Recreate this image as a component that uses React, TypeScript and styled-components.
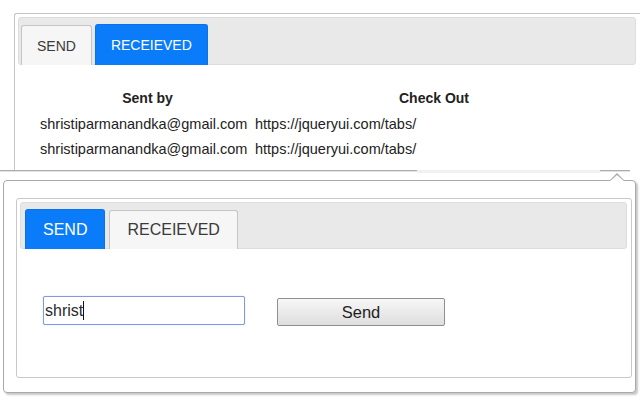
import React from "react";
import styled, { createGlobalStyle, css } from "styled-components";

const GlobalStyle = createGlobalStyle`
  html, body { margin: 0; padding: 0; background: #ffffff; }
  body { font-family: "Liberation Sans", Arial, sans-serif; color: #222; }
  * { box-sizing: border-box; }
`;

type Size = "sm" | "lg";

const Page = styled.div`
  width: 640px;
  height: 400px;
  overflow: hidden;
  display: flex;
  flex-direction: column;
  background: #fff;
`;

const TopPopup = styled.section`
  margin: 13px 0 0 14px;
  width: 626px;
  height: 157px;
  border-top: 1px solid #c4c4c4;
  border-left: 1px solid #c4c4c4;
  border-top-left-radius: 3px;
  padding: 3px 4px 0 3px;
  display: flex;
  flex-direction: column;
`;

const TabBar = styled.div<{ $size: Size }>`
  display: flex;
  align-items: flex-end;
  background: #e9e9e9;
  border: 1px solid #dddddd;
  border-radius: 3px;
  ${(p) =>
    p.$size === "sm"
      ? css`
          height: 48px;
          padding: 0 2px;
          gap: 3px;
        `
      : css`
          height: 47px;
          padding: 0 4px;
          gap: 4px;
        `}
`;

const Tab = styled.div<{ $size: Size; $active?: boolean }>`
  display: flex;
  align-items: center;
  justify-content: center;
  margin-bottom: -1px;
  border: 1px solid #c5c5c5;
  border-bottom: none;
  border-radius: 3px 3px 0 0;
  background: #f6f6f6;
  color: #3a3a3a;
  ${(p) =>
    p.$size === "sm"
      ? css`
          font-size: 14px;
          padding: 0 15px;
          height: ${p.$active ? 41 : 40}px;
        `
      : css`
          font-size: 16px;
          padding: 0 17px;
          height: ${p.$active ? 40 : 39}px;
        `}
  ${(p) =>
    p.$active &&
    css`
      background: #0a7cfa;
      border-color: #0a72ee;
      color: #ffffff;
    `}
`;

const ListPanel = styled.div`
  padding: 20px 0 0 22px;
`;

const Table = styled.table`
  border-collapse: collapse;
  width: 573px;
  font-size: 14.5px;
  color: #222;
`;

const Th = styled.th<{ $w?: number }>`
  font-size: 14px;
  font-weight: bold;
  text-align: center;
  height: 26px;
  padding: 0;
  ${(p) => p.$w && `width: ${p.$w}px;`}
`;

const Td = styled.td`
  height: 25px;
  padding: 0;
  text-align: left;
  white-space: nowrap;
`;

const Seam = styled.div`
  height: 10px;
  display: flex;
  align-items: flex-start;
`;

const SeamLine = styled.div<{ $w: number }>`
  width: ${(p) => p.$w}px;
  height: 2px;
  border-top: 1px solid #adadad;
  border-bottom: 1px solid #e2e2e2;
`;

const SeamBand = styled.div<{ $w: number }>`
  width: ${(p) => p.$w}px;
  height: 3px;
  background: #f1f1f1;
`;

const BottomPopup = styled.section`
  position: relative;
  margin-left: 3px;
  width: 633px;
  height: 213px;
  border: 1px solid #a9a9a9;
  border-radius: 4px;
  box-shadow: 2px 2px 2px rgba(0, 0, 0, 0.22);
  padding: 17px 3px 14px 12px;
  display: flex;
  background: #fff;

  &::before,
  &::after {
    content: "";
    position: absolute;
    right: 10px;
    width: 0;
    height: 0;
    border-left: 8px solid transparent;
    border-right: 8px solid transparent;
  }
  &::before {
    top: -8px;
    border-bottom: 8px solid #a9a9a9;
  }
  &::after {
    top: -6px;
    border-bottom: 7px solid #ffffff;
  }
`;

const Card = styled.div`
  flex: 1;
  border: 1px solid #c8c8c8;
  border-radius: 3px;
  padding: 3px 4px 3px 3px;
  display: flex;
  flex-direction: column;
`;

const FormPanel = styled.div`
  display: flex;
  align-items: flex-start;
  gap: 32px;
  padding: 47px 0 0 23px;
`;

const Field = styled.div`
  width: 202px;
  height: 29px;
  border: 1px solid #8199e0;
  box-shadow: 0 0 1px #a9bbef;
  border-radius: 2px;
  padding: 0 1px;
  display: flex;
  align-items: center;
  font-size: 16px;
  color: #2a2a2a;
  background: #fff;
`;

const Caret = styled.span`
  display: inline-block;
  width: 1px;
  height: 19px;
  background: #111;
  margin-left: 0px;
`;

const Button = styled.button`
  margin-top: 2px;
  width: 168px;
  height: 28px;
  border: 1px solid #8f8f8f;
  border-radius: 2px;
  background: linear-gradient(#f7f7f7, #dedede);
  font-family: "Liberation Sans", Arial, sans-serif;
  font-size: 16.5px;
  color: #1e1e1e;
  padding: 0;
`;

const rows = [
  { from: "shristiparmanandka@gmail.com", link: "https://jqueryui.com/tabs/" },
  { from: "shristiparmanandka@gmail.com", link: "https://jqueryui.com/tabs/" },
];

export default function App() {
  return (
    <>
      <GlobalStyle />
      <Page>
        <TopPopup>
          <TabBar $size="sm">
            <Tab $size="sm">SEND</Tab>
            <Tab $size="sm" $active>
              RECEIEVED
            </Tab>
          </TabBar>
          <ListPanel>
            <Table>
              <thead>
                <tr>
                  <Th $w={215}>Sent by</Th>
                  <Th>Check Out</Th>
                </tr>
              </thead>
              <tbody>
                {rows.map((r, i) => (
                  <tr key={i}>
                    <Td>{r.from}</Td>
                    <Td>{r.link}</Td>
                  </tr>
                ))}
              </tbody>
            </Table>
          </ListPanel>
        </TopPopup>
        <Seam>
          <SeamLine $w={417} />
          <SeamBand $w={183} />
          <SeamLine $w={30} />
        </Seam>
        <BottomPopup>
          <Card>
            <TabBar $size="lg">
              <Tab $size="lg" $active>
                SEND
              </Tab>
              <Tab $size="lg">RECEIEVED</Tab>
            </TabBar>
            <FormPanel>
              <Field>
                shrist
                <Caret />
              </Field>
              <Button>Send</Button>
            </FormPanel>
          </Card>
        </BottomPopup>
      </Page>
    </>
  );
}
